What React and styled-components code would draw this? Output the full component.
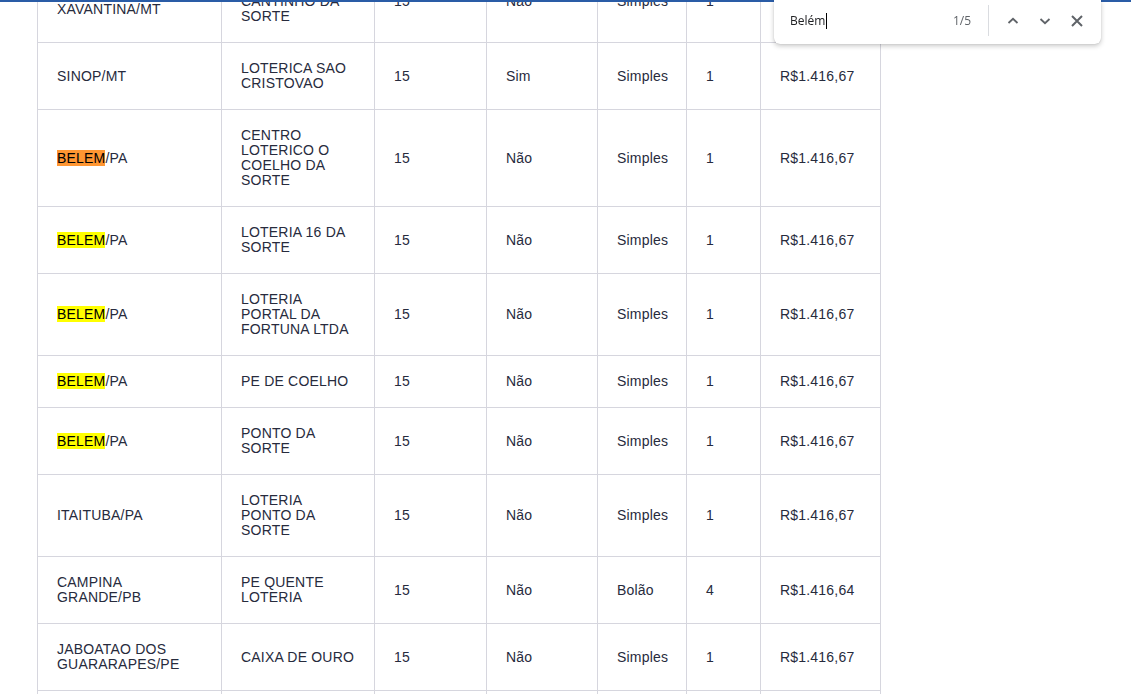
import React from "react";
import styled, { createGlobalStyle } from "styled-components";

const Global = createGlobalStyle`
  html, body { margin: 0; padding: 0; background: #fff; overflow: hidden; }
  body { font-family: "Liberation Sans", Arial, sans-serif; }
`;

const TopLine = styled.div`
  position: fixed;
  top: 0;
  left: 0;
  right: 0;
  height: 2px;
  background: #2a5ca6;
  z-index: 5;
`;

const Page = styled.div`
  padding-left: 37px;
`;

const Table = styled.table`
  margin-top: -40px;
  border-collapse: collapse;
  table-layout: fixed;
  width: 843px;
`;

const Cell = styled.td`
  box-sizing: border-box;
  border: 1px solid #d6d6de;
  padding: 18px 18px 18px 19px;
  font-size: 14px;
  line-height: 15px;
  letter-spacing: 0.2px;
  color: #272b3d;
  vertical-align: middle;
  text-align: left;
`;

const Hit = styled.mark`
  background: ${(p) => (p.$active ? "#ff9632" : "#ffff00")};
  color: #000;
`;

const FindBar = styled.div`
  position: fixed;
  top: 0;
  right: 30px;
  width: 327px;
  height: 44px;
  box-sizing: border-box;
  padding: 0 8px 3px 16px;
  background: #fff;
  border-radius: 0 0 6px 6px;
  box-shadow: 0 2px 5px rgba(0, 0, 0, 0.22), 0 0 1px rgba(0, 0, 0, 0.25);
  display: flex;
  align-items: center;
  z-index: 10;
  font-family: "Open Sans", "Noto Sans", sans-serif;
`;

const Query = styled.div`
  flex: 1;
  display: flex;
  align-items: center;
  font-size: 12px;
  color: #202124;
`;

const Caret = styled.span`
  display: inline-block;
  width: 1px;
  height: 16px;
  background: #000;
  margin-left: 1px;
`;

const Count = styled.div`
  font-size: 12px;
  color: #5f6368;
  margin-right: 17px;
`;

const Divider = styled.div`
  width: 1px;
  height: 31px;
  background: #dadce0;
  margin-right: 8px;
`;

const IconButton = styled.button`
  width: 32px;
  height: 32px;
  border: 0;
  padding: 0;
  background: transparent;
  display: flex;
  align-items: center;
  justify-content: center;
  color: #5f6368;
`;

const ChevronUp = () => (
  <svg width="12" height="12" viewBox="0 0 12 12">
    <polyline points="1.5,8 6,3.8 10.5,8" fill="none" stroke="currentColor" strokeWidth="1.8" />
  </svg>
);
const ChevronDown = () => (
  <svg width="12" height="12" viewBox="0 0 12 12">
    <polyline points="1.5,4 6,8.2 10.5,4" fill="none" stroke="currentColor" strokeWidth="1.8" />
  </svg>
);
const CloseIcon = () => (
  <svg width="12" height="12" viewBox="0 0 12 12">
    <path d="M1 1 L11 11 M11 1 L1 11" fill="none" stroke="currentColor" strokeWidth="2" />
  </svg>
);

const widths = [184, 153, 112, 111, 89, 74, 120];

const rows = [
  ["NOVA XAVANTINA/MT", "LOTERICA CANTINHO DA SORTE", "15", "Não", "Simples", "1", "R$1.416,67"],
  ["SINOP/MT", "LOTERICA SAO CRISTOVAO", "15", "Sim", "Simples", "1", "R$1.416,67"],
  ["BELEM*", "CENTRO LOTERICO O COELHO DA SORTE", "15", "Não", "Simples", "1", "R$1.416,67"],
  ["BELEM", "LOTERIA 16 DA SORTE", "15", "Não", "Simples", "1", "R$1.416,67"],
  ["BELEM", "LOTERIA PORTAL DA FORTUNA LTDA", "15", "Não", "Simples", "1", "R$1.416,67"],
  ["BELEM", "PE DE COELHO", "15", "Não", "Simples", "1", "R$1.416,67"],
  ["BELEM", "PONTO DA SORTE", "15", "Não", "Simples", "1", "R$1.416,67"],
  ["ITAITUBA/PA", "LOTERIA PONTO DA SORTE", "15", "Não", "Simples", "1", "R$1.416,67"],
  ["CAMPINA GRANDE/PB", "PE QUENTE LOTERIA", "15", "Não", "Bolão", "4", "R$1.416,64"],
  ["JABOATAO DOS GUARARAPES/PE", "CAIXA DE OURO", "15", "Não", "Simples", "1", "R$1.416,67"],
  ["RECIFE/PE", "LOTERICA BOA SORTE", "15", "Não", "Simples", "1", "R$1.416,67"],
];

function City({ value }) {
  if (value.startsWith("BELEM")) {
    return (
      <>
        <Hit $active={value.endsWith("*")}>BELEM</Hit>/PA
      </>
    );
  }
  return value;
}

export default function App() {
  return (
    <>
      <Global />
      <TopLine />
      <Page>
        <Table>
          <colgroup>
            {widths.map((w, i) => (
              <col key={i} style={{ width: w }} />
            ))}
          </colgroup>
          <tbody>
            {rows.map((r, i) => (
              <tr key={i}>
                <Cell>
                  <City value={r[0]} />
                </Cell>
                {r.slice(1).map((v, j) => (
                  <Cell key={j}>{v}</Cell>
                ))}
              </tr>
            ))}
          </tbody>
        </Table>
      </Page>
      <FindBar>
        <Query>
          Belém
          <Caret />
        </Query>
        <Count>1/5</Count>
        <Divider />
        <IconButton aria-label="Anterior">
          <ChevronUp />
        </IconButton>
        <IconButton aria-label="Próximo">
          <ChevronDown />
        </IconButton>
        <IconButton aria-label="Fechar">
          <CloseIcon />
        </IconButton>
      </FindBar>
    </>
  );
}
